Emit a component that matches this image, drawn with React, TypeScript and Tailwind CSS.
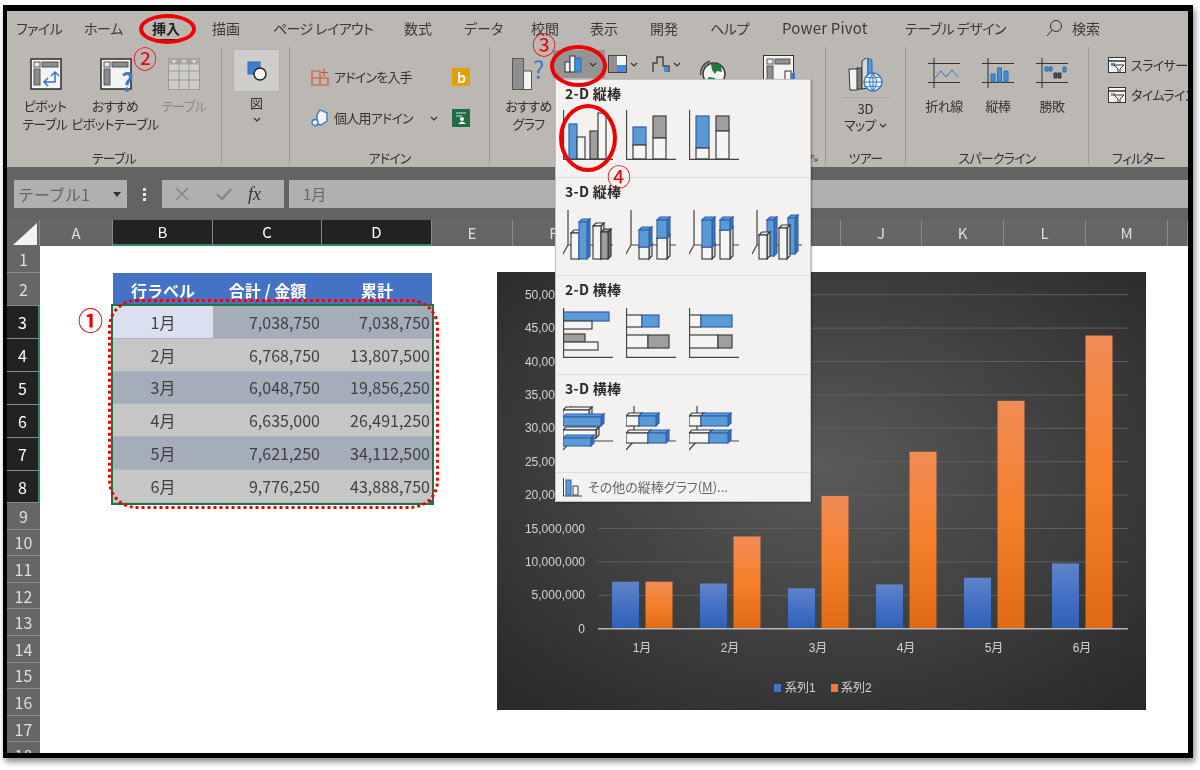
import type { ReactNode } from "react";

const tabs = [
  { label: "ファイル", w: "w-[68px] tracking-[-0.6px]" },
  { label: "ホーム", w: "w-[68px] tracking-[-0.4px]" },
  { label: "挿入", w: "w-[60px] font-bold text-[#222]" },
  { label: "描画", w: "w-[61px]" },
  { label: "ページ レイアウト", w: "w-[131px] tracking-[-0.6px]" },
  { label: "数式", w: "w-[60px]" },
  { label: "データ", w: "w-[67px]" },
  { label: "校閲", w: "w-[59px]" },
  { label: "表示", w: "w-[60px]" },
  { label: "開発", w: "w-[60px]" },
  { label: "ヘルプ", w: "w-[72px] tracking-[-0.4px]" },
  { label: "Power Pivot", w: "w-[123px] text-[15px] tracking-[0.2px]" },
  { label: "テーブル デザイン", w: "w-[140px] tracking-[-0.5px]" },
];

const columns = [
  { label: "A", w: "w-[73px]", on: false },
  { label: "B", w: "w-[100px]", on: true },
  { label: "C", w: "w-[109px]", on: true },
  { label: "D", w: "w-[110px]", on: true },
  { label: "E", w: "w-[81px]", on: false },
  { label: "F", w: "w-[82px]", on: false },
  { label: "G", w: "w-[82px]", on: false },
  { label: "H", w: "w-[82px]", on: false },
  { label: "I", w: "w-[82px]", on: false },
  { label: "J", w: "w-[81px]", on: false },
  { label: "K", w: "w-[82px]", on: false },
  { label: "L", w: "w-[82px]", on: false },
  { label: "M", w: "w-[82px]", on: false },
  { label: "", w: "w-[20px]", on: false },
];

const rowHeads = [
  { n: 1, h: "h-[27px]", on: false },
  { n: 2, h: "h-[33px]", on: false },
  { n: 3, h: "h-[33px]", on: true },
  { n: 4, h: "h-[33px]", on: true },
  { n: 5, h: "h-[33px]", on: true },
  { n: 6, h: "h-[33px]", on: true },
  { n: 7, h: "h-[33px]", on: true },
  { n: 8, h: "h-[32px]", on: true },
  ...[9, 10, 11, 12, 13, 14, 15, 16, 17, 18].map((n) => ({ n, h: "h-[26.6px]", on: false })),
];

const s1 = [7038750, 6768750, 6048750, 6635000, 7621250, 9776250];
const s2 = [7038750, 13807500, 19856250, 26491250, 34112500, 43888750];
const fmt = (v: number) => v.toLocaleString("en-US");

function Chevron({ className = "" }: { className?: string }) {
  return (
    <svg width="8" height="5" viewBox="0 0 8 5" className={className}>
      <path d="M1 1l3 3 3-3" fill="none" stroke="#333" strokeWidth="1.2" />
    </svg>
  );
}

function PivotIcon({ ask }: { ask?: boolean }) {
  return (
    <svg width="36" height="33" viewBox="0 0 36 33" className="overflow-visible">
      <rect x="1" y="1" width="30" height="30" fill="#f4f4f4" stroke="#2b2b2b" strokeWidth="1.5" />
      <rect x="4" y="4" width="6" height="5" fill="#e8e8e8" stroke="#555" />
      <rect x="12" y="4" width="16" height="5" fill="#8c8c8c" stroke="#555" />
      <rect x="4" y="11" width="6" height="16" fill="#8c8c8c" stroke="#555" />
      {ask ? (
        <text x="21" y="34" fontSize="25" fontWeight="700" fill="#3f78c4">?</text>
      ) : (
        <path d="M25 15v9H15M21 18l4-4 4 4M18 20l-4 4 4 4" fill="none" stroke="#2f78c8" strokeWidth="1.5" />
      )}
    </svg>
  );
}

function TableIcon() {
  return (
    <svg width="32" height="32" viewBox="0 0 32 32">
      <rect x="0.5" y="0.5" width="31" height="31" fill="#cfcdca" stroke="#999" />
      <rect x="0.5" y="0.5" width="31" height="6" fill="#aaa" />
      <path d="M11 1v30M21 1v30M1 13h30M1 22h30" stroke="#999" fill="none" />
      <path d="M4 2.5h4l-2 2.5zM14 2.5h4l-2 2.5zM24 2.5h4l-2 2.5z" fill="#eee" />
    </svg>
  );
}

function SparkIcon({ children }: { children: ReactNode }) {
  return (
    <svg width="32" height="30" viewBox="0 0 32 30">
      <path d="M0 5.500h32M0 24.500h32M6 0v30" stroke="#333" fill="none" />
      {children}
    </svg>
  );
}

// small clustered bar chart glyphs in the ribbon
function ColumnGlyph() {
  return (
    <svg width="18" height="18" viewBox="0 0 18 18">
      <rect x="1" y="7" width="5" height="10" fill="#f4f4f4" stroke="#333" />
      <rect x="6" y="1" width="5" height="16" fill="#f4f4f4" stroke="#333" />
      <rect x="11" y="3" width="6" height="14" fill="#3f8fdb" stroke="#2f6fb5" />
    </svg>
  );
}

function Bar3D({ x, y, w, h, fill }: { x: number; y: number; w: number; h: number; fill: string }) {
  const d = 3;
  const side = fill === "#f4f6f5" ? "#d8d8d8" : fill === "#5b9bd5" ? "#3f73b5" : "#6f6f6f";
  const edge = fill === "#5b9bd5" ? "#2f5fb0" : "#333";
  return (
    <g stroke={edge} strokeWidth="1.1">
      <path d={`M${x} ${y}l${d} ${-d}h${w}l${-d} ${d}z`} fill={fill} />
      <path d={`M${x + w} ${y}l${d} ${-d}v${h}l${-d} ${d}z`} fill={side} />
      <rect x={x} y={y} width={w} height={h} fill={fill} />
    </g>
  );
}

const W = "#f4f6f5";
const B = "#5b9bd5";
const G = "#a09f9e";

function Rect({ x, y, w, h, f }: { x: number; y: number; w: number; h: number; f: string }) {
  return <rect x={x} y={y} width={w} height={h} fill={f} stroke={f === B ? "#2f5fb0" : "#404040"} strokeWidth="1.2" />;
}

function Axis2D({ children }: { children: ReactNode }) {
  return (
    <svg width="50" height="50" viewBox="0 0 50 50">
      {children}
      <path d="M0.5 0v49.3H50" fill="none" stroke="#444" strokeWidth="1.3" />
    </svg>
  );
}

function Axis3D({ children, x = 5 }: { children: ReactNode; x?: number }) {
  return (
    <svg width="50" height="52" viewBox="0 0 50 52">
      <path d={`M${x} 0v35H50M${x} 35l-${x} 9`} fill="none" stroke="#444" strokeWidth="1.2" />
      {children}
    </svg>
  );
}

const Vbar = (x: number, w: number, top: number, bottom: number, f: string) => (
  <Bar3D x={x} y={top} w={w} h={bottom - top} fill={f} />
);

function MenuHead({ children }: { children: ReactNode }) {
  return (
    <div className="h-[26px] pl-[9px] text-[14px] leading-[26px] font-bold tracking-[0.3px] text-[#2b2b2b] [font-feature-settings:normal]">
      {children}
    </div>
  );
}

function BigBtn({ icon, lines, w, muted }: { icon: ReactNode; lines: string[]; w: string; muted?: boolean }) {
  return (
    <div className={`flex shrink-0 flex-col items-center ${w}`}>
      <div className="flex h-[32px] items-start justify-center">{icon}</div>
      <div
        className={`mt-[7px] text-center text-[13px] leading-[18px] tracking-[-0.6px] whitespace-nowrap ${
          muted ? "text-[#8b8b8b]" : "text-[#333]"
        }`}
      >
        {lines.map((l) => (
          <div key={l}>{l}</div>
        ))}
      </div>
    </div>
  );
}

function Group({ w, label, children, extra }: { w: string; label: string; children: ReactNode; extra?: ReactNode }) {
  return (
    <div className={`relative mb-[3px] flex shrink-0 flex-col border-r border-[#9c9a97] ${w}`}>
      <div className="flex-1">{children}</div>
      <div className="h-[17px] text-center text-[13px] leading-[22px] tracking-[-0.8px] text-[#333]">{label}</div>
      {extra}
    </div>
  );
}

function Chart() {
  const zero = 356.7;
  const unit = 33.4 / 5000000;
  return (
    <svg
      width="649"
      height="438"
      viewBox="0 0 649 438"
      className="absolute top-[261px] left-[490px] [font-family:'Liberation_Sans','Noto_Sans_CJK_JP',sans-serif]"
    >
      <defs>
        <radialGradient id="bg" cx="50%" cy="45%" r="70%">
          <stop offset="0" stopColor="#5a5a5a" />
          <stop offset="1" stopColor="#2a2a2a" />
        </radialGradient>
        <linearGradient id="blue" x1="0" y1="0" x2="0" y2="1">
          <stop offset="0" stopColor="#6083ca" />
          <stop offset="0.6" stopColor="#3f6dc2" />
          <stop offset="1" stopColor="#2f5fb3" />
        </linearGradient>
        <linearGradient id="orange" x1="0" y1="0" x2="0" y2="1">
          <stop offset="0" stopColor="#f08c55" />
          <stop offset="0.5" stopColor="#f67f2b" />
          <stop offset="1" stopColor="#e06a14" />
        </linearGradient>
      </defs>
      <rect width="649" height="438" fill="url(#bg)" />
      {[1, 2, 3, 4, 5, 6, 7, 8, 9, 10].map((i) => (
        <path key={i} d={`M101 ${zero - i * 33.4}H631`} stroke="#5e5e5e" strokeWidth="1" />
      ))}
      {[0, 1, 2, 3, 4, 5, 6, 7, 8, 9, 10].map((i) => (
        <text key={i} x="88" y={zero - i * 33.4 + 4} textAnchor="end" fontSize="12" fill="#d4d4d4">
          {fmt(i * 5000000)}
        </text>
      ))}
      {s1.map((v, i) => {
        const x = 115 + i * 88;
        return (
          <g key={i}>
            <rect x={x} y={zero - v * unit} width="27" height={v * unit} fill="url(#blue)" />
            <rect x={x + 33.5} y={zero - s2[i] * unit} width="27" height={s2[i] * unit} fill="url(#orange)" />
            <text x={x + 30} y="380" textAnchor="middle" fontSize="12" fill="#d4d4d4">
              {i + 1}月
            </text>
          </g>
        );
      })}
      <path d={`M101 ${zero}H631`} stroke="#b5b5b5" strokeWidth="1.6" />
      <rect x="277" y="412" width="7" height="8" fill="#4472c4" />
      <text x="288" y="420" fontSize="12" fill="#d4d4d4">系列1</text>
      <rect x="334" y="412" width="7" height="8" fill="#ed7d31" />
      <text x="344" y="420" fontSize="12" fill="#d4d4d4">系列2</text>
    </svg>
  );
}

function Menu() {
  return (
    <div className="absolute top-[68px] left-[548px] z-10 flex h-[423px] w-[256px] flex-col border border-[#c4c2c0] bg-[#f3f2f1] shadow-[1px_1px_2px_rgba(0,0,0,0.3)]">
      <div className="h-[98px] border-b border-[#e1dfdd]">
        <MenuHead>2-D 縦棒</MenuHead>
        <div className="flex gap-[13px] pt-[4px] pl-[7px]">
          <Axis2D>
            <Rect x={6} y={14} w={8} h={35} f={B} />
            <Rect x={14} y={27} w={8} h={22} f={W} />
            <Rect x={27} y={21} w={8} h={28} f={G} />
            <Rect x={35} y={3} w={8} h={46} f={W} />
          </Axis2D>
          <Axis2D>
            <Rect x={7} y={17} w={13} h={18} f={B} />
            <Rect x={7} y={35} w={13} h={14} f={W} />
            <Rect x={27} y={6} w={13} h={22} f={G} />
            <Rect x={27} y={28} w={13} h={21} f={W} />
          </Axis2D>
          <Axis2D>
            <Rect x={7} y={6} w={13} h={32} f={B} />
            <Rect x={7} y={38} w={13} h={11} f={W} />
            <Rect x={27} y={6} w={13} h={15} f={G} />
            <Rect x={27} y={21} w={13} h={28} f={W} />
          </Axis2D>
        </div>
      </div>
      <div className="h-[98px] border-b border-[#e1dfdd]">
        <MenuHead>3-D 縦棒</MenuHead>
        <div className="flex gap-[13px] pt-[6px] pl-[7px]">
          <Axis3D>
            {Vbar(8, 8, 23, 49, W)}
            {Vbar(16, 8, 12, 49, B)}
            {Vbar(30, 8, 16, 49, W)}
            {Vbar(38, 7, 22, 49, G)}
          </Axis3D>
          <Axis3D>
            {Vbar(13, 10, 37, 49, W)}
            {Vbar(13, 10, 20, 37, B)}
            {Vbar(31, 10, 28, 49, W)}
            {Vbar(31, 10, 10, 28, B)}
          </Axis3D>
          <Axis3D>
            {Vbar(13, 10, 37, 49, W)}
            {Vbar(13, 10, 10, 37, B)}
            {Vbar(31, 10, 20, 49, W)}
            {Vbar(31, 10, 10, 20, B)}
          </Axis3D>
          <Axis3D>
            {Vbar(15, 7, 10, 46, B)}
            {Vbar(36, 7, 8, 44, B)}
            {Vbar(7, 8, 25, 49, W)}
            {Vbar(27, 8, 18, 49, W)}
          </Axis3D>
        </div>
      </div>
      <div className="h-[99px] border-b border-[#e1dfdd]">
        <MenuHead>2-D 横棒</MenuHead>
        <div className="flex gap-[13px] pt-[6px] pl-[7px]">
          <Axis2D>
            <Rect x={0} y={4} w={46} h={9} f={B} />
            <Rect x={0} y={13} w={29} h={8} f={W} />
            <Rect x={0} y={26} w={22} h={8} f={G} />
            <Rect x={0} y={34} w={35} h={8} f={W} />
          </Axis2D>
          <Axis2D>
            <Rect x={0} y={7} w={16} h={12} f={W} />
            <Rect x={16} y={7} w={17} h={12} f={B} />
            <Rect x={0} y={27} w={22} h={13} f={W} />
            <Rect x={22} y={27} w={21} h={13} f={G} />
          </Axis2D>
          <Axis2D>
            <Rect x={0} y={7} w={12} h={12} f={W} />
            <Rect x={12} y={7} w={31} h={12} f={B} />
            <Rect x={0} y={27} w={29} h={13} f={W} />
            <Rect x={29} y={27} w={14} h={13} f={G} />
          </Axis2D>
        </div>
      </div>
      <div className="h-[98px] border-b border-[#e1dfdd]">
        <MenuHead>3-D 横棒</MenuHead>
        <div className="flex gap-[13px] pt-[5px] pl-[7px]">
          <Axis3D x={8}>
            <Bar3D x={0} y={4} w={26} h={7} fill={W} />
            <Bar3D x={0} y={11} w={38} h={9} fill={B} />
            <Bar3D x={0} y={24} w={33} h={8} fill={W} />
            <Bar3D x={0} y={32} w={28} h={8} fill={B} />
          </Axis3D>
          <Axis3D x={8}>
            <Bar3D x={0} y={10} w={13} h={10} fill={W} />
            <Bar3D x={13} y={10} w={17} h={10} fill={B} />
            <Bar3D x={0} y={27} w={22} h={10} fill={W} />
            <Bar3D x={22} y={27} w={18} h={10} fill={B} />
          </Axis3D>
          <Axis3D x={8}>
            <Bar3D x={0} y={10} w={12} h={10} fill={W} />
            <Bar3D x={12} y={10} w={27} h={10} fill={B} />
            <Bar3D x={0} y={27} w={20} h={10} fill={W} />
            <Bar3D x={20} y={27} w={19} h={10} fill={B} />
          </Axis3D>
        </div>
      </div>
      <div className="flex flex-1 items-center gap-[6px] pl-[7px]">
        <svg width="19" height="19" viewBox="0 0 19 19">
          <rect x="3" y="2" width="5" height="15" fill="#5b9bd5" stroke="#2f5fb0" />
          <rect x="10" y="8" width="5" height="9" fill="#f4f6f5" stroke="#444" />
          <path d="M0.5 0v18H19" fill="none" stroke="#444" />
        </svg>
        <span className="text-[13px] text-[#666]">
          その他の縦棒グラフ(<span className="underline">M</span>)...
        </span>
      </div>
    </div>
  );
}

export default function App() {
  return (
    <div className="h-[770px] w-[1200px] overflow-hidden bg-white pt-[5px] pl-[3px] blur-[0.3px] [font-family:'Noto_Sans_CJK_JP',sans-serif] [font-feature-settings:'palt']">
      <div className="h-[753px] w-[1190px] border-t-[6px] border-r-[5px] border-b-[5px] border-l-[4px] border-black shadow-[2px_4px_6px_rgba(0,0,0,0.45)]">
        <div className="relative h-full w-full overflow-hidden bg-white">
          {/* ribbon */}
          <div className="h-[156px] bg-[#bbb7b3]">
            <div className="flex h-[36px] items-center pb-[2px] pl-[9px] text-[14px] text-[#3a3a3a]">
              {tabs.map((t) => (
                <div key={t.label} className={`shrink-0 whitespace-nowrap ${t.w}`}>
                  {t.label}
                </div>
              ))}
              <svg width="18" height="18" viewBox="0 0 18 18" className="mr-[9px] shrink-0">
                <circle cx="11" cy="7" r="5.5" fill="none" stroke="#333" />
                <path d="M7 11l-5 6" stroke="#333" />
              </svg>
              <span className="shrink-0">検索</span>
            </div>
            <div className="flex h-[120px]">
              <Group w="w-[215px]" label="テーブル">
                <div className="flex pt-[11px] pl-[7px]">
                  <BigBtn w="w-[62px]" icon={<div className="pl-[6px]"><PivotIcon /></div>} lines={["ピボット", "テーブル"]} />
                  <BigBtn w="w-[78px]" icon={<div className="pl-[6px]"><PivotIcon ask /></div>} lines={["おすすめ", "ピボットテーブル"]} />
                  <BigBtn w="w-[60px]" icon={<TableIcon />} lines={["テーブル"]} muted />
                </div>
              </Group>
              <Group w="w-[68px]" label="">
                <div className="flex flex-col pt-[2px] pl-[11px]">
                  <div className="flex h-[43px] w-[47px] items-center justify-center border border-[#b5b3b0] bg-[#cfcdcb]">
                    <svg width="20" height="20" viewBox="0 0 20 20">
                      <rect x="1" y="1" width="12" height="12" fill="#3f7fd0" stroke="#2a66b5" />
                      <circle cx="13" cy="13" r="6" fill="#f4f4f4" stroke="#222" strokeWidth="1.4" />
                    </svg>
                  </div>
                  <div className="mt-[2px] w-[47px] text-center text-[13px] leading-[18px] text-[#333]">図</div>
                  <Chevron className="mx-auto mt-[5px] ml-[20px]" />
                </div>
              </Group>
              <Group w="w-[200px]" label="アドイン">
                <div className="flex w-[180px] flex-col gap-[23px] pt-[21px] pl-[21px] text-[13px] tracking-[-0.8px] text-[#333]">
                  <div className="flex h-[18px] items-center justify-between">
                    <div className="flex items-center gap-[5px]">
                      <svg width="18" height="18" viewBox="0 0 18 18">
                        <path d="M1 3h8v14H1zM1 10h16v7H9M13 1v7M10 4.500h7" fill="none" stroke="#d8552b" strokeWidth="1.2" />
                      </svg>
                      <span>アドインを入手</span>
                    </div>
                    <div className="flex h-[18px] w-[18px] items-center justify-center bg-[#e3a008] text-[14px] leading-none font-bold text-white">b</div>
                  </div>
                  <div className="flex h-[18px] items-center justify-between">
                    <div className="flex items-center gap-[5px]">
                      <svg width="18" height="18" viewBox="0 0 18 18">
                        <path d="M9 1l7 3v8l-6 4-4-1V6z" fill="#f4f4f4" stroke="#2a78c8" strokeWidth="1.3" />
                        <circle cx="4" cy="13.500" r="3" fill="#f4f4f4" stroke="#2a78c8" strokeWidth="1.3" />
                      </svg>
                      <span>個人用アドイン</span>
                      <Chevron className="ml-[12px]" />
                    </div>
                    <svg width="18" height="18" viewBox="0 0 18 18">
                      <rect width="18" height="18" fill="#1f6e43" />
                      <path d="M4 4h10M4 7h6" stroke="#cfe6d8" strokeWidth="1.2" />
                      <circle cx="10" cy="10" r="2" fill="#fff" />
                      <path d="M6 15q4-5 8 0z" fill="#fff" />
                    </svg>
                  </div>
                </div>
              </Group>
              <Group
                w="w-[336px]"
                label="グラフ"
                extra={
                  <svg width="7" height="7" viewBox="0 0 7 7" className="absolute right-[7px] bottom-[2px]">
                    <path d="M0.5 0.500h3M0.500 0.500v3M2 2l4 4M6 3v3H3" fill="none" stroke="#555" />
                  </svg>
                }
              >
                <div className="flex pl-[12px]">
                  <div className="pt-[11px]">
                    <BigBtn
                      w="w-[53px]"
                      icon={
                        <svg width="34" height="32" viewBox="0 0 34 32">
                          <rect x="0.500" y="0.500" width="11" height="31" fill="#8f8f8f" stroke="#555" />
                          <rect x="11.500" y="13" width="8" height="18.500" fill="#f4f4f4" stroke="#555" />
                          <text x="21" y="21" fontSize="24" fill="#3f78c4">?</text>
                        </svg>
                      }
                      lines={["おすすめ", "グラフ"]}
                    />
                  </div>
                  <div className="-ml-[2px] flex pt-[3px]">
                    <div className="flex h-[28px] w-[52px] items-center gap-[7px] bg-[#949494] pl-[11px]">
                      <ColumnGlyph />
                      <Chevron />
                    </div>
                    <div className="ml-[3px] flex h-[28px] w-[44px] items-center gap-[3px]">
                      <svg width="19" height="18" viewBox="0 0 19 18">
                        <rect x="0.500" y="0.500" width="18" height="17" fill="#f4f4f4" stroke="#444" />
                        <rect x="1" y="1" width="8" height="16" fill="#8f8f8f" />
                        <rect x="9" y="10" width="9" height="7" fill="#3f8fdb" />
                      </svg>
                      <Chevron />
                    </div>
                    <div className="flex h-[28px] w-[47px] items-center gap-[3px]">
                      <svg width="18" height="18" viewBox="0 0 18 18">
                        <path d="M1 17V8h4V2h6v9h6v6" fill="none" stroke="#444" strokeWidth="1.4" />
                        <path d="M12 12h4v5h-4z" fill="#3f8fdb" />
                      </svg>
                      <Chevron />
                    </div>
                    <div className="pt-[9px]">
                      <svg width="28" height="28" viewBox="0 0 28 28">
                        <path d="M1.500 16Q1 6 11 2" fill="none" stroke="#444" strokeWidth="1.5" />
                        <circle cx="15" cy="15" r="11" fill="#f4f4f4" stroke="#333" strokeWidth="1.4" />
                        <path d="M12 5q5-2 10 2l1 6-5-1-2 3-3-4zM9 18l7 1v3l-6 0z" fill="#1d7a3a" />
                      </svg>
                    </div>
                    <div className="ml-[36px] pt-[5px]">
                      <svg width="32" height="30" viewBox="0 0 32 30">
                        <rect x="0.500" y="0.500" width="30" height="29" fill="#f4f4f4" stroke="#333" />
                        <rect x="4" y="4" width="6" height="5" fill="#e8e8e8" stroke="#555" />
                        <rect x="12" y="4" width="15" height="5" fill="#8f8f8f" stroke="#555" />
                        <rect x="4" y="11" width="6" height="18" fill="#8f8f8f" stroke="#555" />
                        <rect x="22" y="16" width="6" height="13" fill="#f4f4f4" stroke="#333" />
                        <rect x="28" y="18" width="4" height="11" fill="#3f78c4" />
                      </svg>
                    </div>
                  </div>
                </div>
              </Group>
              <Group w="w-[80px]" label="ツアー">
                <div className="flex flex-col items-center pt-[11px] text-[13px] leading-[16px] text-[#333]">
                  <svg width="36" height="34" viewBox="0 0 36 34">
                    <path d="M1 11h8l2 1v19l-2 1H2z" fill="#f4f4f4" stroke="#333" />
                    <rect x="9" y="10" width="5" height="21" fill="#7d7d7d" stroke="#333" />
                    <path d="M14 3l4-3h2v30l-6 1z" fill="#d9d9d9" stroke="#333" />
                    <path d="M20 0l4 2v20h-4z" fill="#5b9bd5" stroke="#2f6fb5" />
                    <circle cx="25" cy="24" r="9" fill="#f4f4f4" stroke="#2f78c8" strokeWidth="1.4" />
                    <path d="M16 24h18M25 15v18M18 19q7 2 14 0M18 29q7-2 14 0M25 15q-7 9 0 18M25 15q7 9 0 18" fill="none" stroke="#2f78c8" />
                  </svg>
                  <div className="mt-[5px] h-px w-[48px] bg-[#a8a6a3]" />
                  <div className="mt-[3px]">3D</div>
                  <div className="flex items-center gap-[3px] tracking-[-0.6px]">
                    マップ
                    <Chevron />
                  </div>
                </div>
              </Group>
              <Group w="w-[183px]" label="スパークライン">
                <div className="flex pt-[11px] pl-[11px]">
                  <BigBtn
                    w="w-[54px]"
                    icon={
                      <SparkIcon>
                        <path d="M7 20l6-7 5 6 6-7 6 7" fill="none" stroke="#2f78c8" />
                      </SparkIcon>
                    }
                    lines={["折れ線"]}
                  />
                  <BigBtn
                    w="w-[54px]"
                    icon={
                      <SparkIcon>
                        <path d="M9 16h4v8H9zM15.500 10h4v14h-4zM22 13h4v11h-4z" fill="#3f8fdb" stroke="#2f6fb5" />
                      </SparkIcon>
                    }
                    lines={["縦棒"]}
                  />
                  <BigBtn
                    w="w-[54px]"
                    icon={
                      <SparkIcon>
                        <path d="M9 9h3v4H9zM13 9h3v4h-3zM27 9h3v5h-3z" fill="#3f8fdb" stroke="#2f6fb5" />
                        <path d="M18 15h3v5h-3zM22 15h3v5h-3z" fill="#555" stroke="#333" />
                      </SparkIcon>
                    }
                    lines={["勝敗"]}
                  />
                </div>
              </Group>
              <Group w="w-[99px] border-r-0" label="フィルター">
                <div className="flex flex-col gap-[15px] pt-[10px] pl-[19px] text-[13px] tracking-[-0.6px] whitespace-nowrap text-[#333]">
                  {["スライサー", "タイムライン"].map((t, i) => (
                    <div key={t} className="flex h-[15px] items-center gap-[5px]">
                      <svg width="18" height="16" viewBox="0 0 18 16" className="shrink-0">
                        <rect x="0.500" y="0.500" width="17" height="15" fill="#f4f4f4" stroke="#333" />
                        <path d="M1 4h16" stroke="#333" strokeWidth="1.5" />
                        {i === 0 ? <rect x="3" y="6" width="4" height="3" fill="#3f8fdb" /> : <rect x="3" y="6" width="4" height="3" fill="#999" />}
                        <path d="M6 8h10l-4 4v3.500h-2V12z" fill="#f4f4f4" stroke="#333" />
                      </svg>
                      <span>{t}</span>
                    </div>
                  ))}
                </div>
              </Group>
            </div>
          </div>

          {/* formula bar */}
          <div className="flex h-[53px] gap-[5px] bg-[#636363] pt-[13px] pb-[12px] pl-[7px]">
            <div className="flex w-[113px] items-center justify-between bg-[#b0b0b0] pr-[6px] pl-[4px] text-[16px] text-[#666] [font-feature-settings:normal]">
              テーブル1
              <svg width="8" height="5" viewBox="0 0 8 5">
                <path d="M0 0h8l-4 5z" fill="#333" />
              </svg>
            </div>
            <div className="flex w-[25px] flex-col items-center justify-center gap-[2px]">
              <i className="h-[3px] w-[3px] bg-[#e5e5e5]" />
              <i className="h-[3px] w-[3px] bg-[#e5e5e5]" />
              <i className="h-[3px] w-[3px] bg-[#e5e5e5]" />
            </div>
            <div className="flex w-[122px] items-center bg-[#b0b0b0]">
              <svg width="14" height="14" viewBox="0 0 14 14" className="ml-[13px]">
                <path d="M1 1l12 12M13 1L1 13" stroke="#858585" strokeWidth="1.6" />
              </svg>
              <svg width="16" height="14" viewBox="0 0 16 14" className="ml-[27px]">
                <path d="M1 7l5 5 9-10" fill="none" stroke="#858585" strokeWidth="2" />
              </svg>
              <span className="ml-[16px] font-['Liberation_Serif',serif] text-[18px] text-[#333] italic">fx</span>
            </div>
            <div className="flex flex-1 items-center bg-[#b0b0b0] pl-[14px] text-[15px] text-[#666]">1月</div>
          </div>

          {/* column headers */}
          <div className="flex h-[26px] bg-[#666] text-[15px]">
            <div className="flex w-[33px] shrink-0 items-end justify-end border-r border-[#8a8a8a] pr-[2px] pb-[1px]">
              <svg width="24" height="22" viewBox="0 0 24 22">
                <path d="M24 0v22H0z" fill="#f2f2f2" />
              </svg>
            </div>
            {columns.map((c, i) => (
              <div
                key={i}
                className={`flex shrink-0 items-center justify-center border-r border-[#8a8a8a] ${c.w} ${
                  c.on ? "border-b-2 border-b-[#2f8a5a] bg-[#222] text-white" : "text-[#dedede]"
                }`}
              >
                {c.label}
              </div>
            ))}
          </div>

          {/* sheet */}
          <div className="flex">
            <div className="w-[33px] shrink-0">
              {rowHeads.map((r) => (
                <div
                  key={r.n}
                  className={`flex items-center justify-center border-b border-[#8a8a8a] text-[16px] ${r.h} ${
                    r.on ? "border-r-2 border-r-[#2f8a5a] bg-[#222] text-white" : "bg-[#666] text-[#dedede]"
                  }`}
                >
                  {r.n}
                </div>
              ))}
            </div>
            <div className="box-content w-[319px] shrink-0 pt-[27px] pl-[73px]">
              <div className="flex h-[33px] w-[319px] items-center bg-[#4472c4] text-[16px] font-bold text-white [font-feature-settings:normal]">
                <div className="w-[100px] text-center">行ラベル</div>
                <div className="w-[109px] text-center">合計 / 金額</div>
                <div className="w-[110px] text-center">累計</div>
              </div>
              <div className="relative w-[319px] text-[16px] text-[#404040] outline-2 outline-[#217346]">
                {s1.map((v, i) => (
                  <div
                    key={i}
                    className={`flex h-[32.8px] items-center border-b border-[#b0b5c2] ${
                      i % 2 === 0 ? "bg-[#a6adba]" : "bg-[#c6c6c6]"
                    }`}
                  >
                    <div className={`flex h-full w-[100px] items-center justify-center ${i === 0 ? "bg-[#dae0f0]" : ""}`}>{i + 1}月</div>
                    <div className="w-[109px] pr-[2px] text-right">{fmt(v)}</div>
                    <div className="w-[110px] pr-[2px] text-right">{fmt(s2[i])}</div>
                  </div>
                ))}
                <i className="absolute -right-[2px] -bottom-[2px] h-[5px] w-[5px] bg-[#217346]" />
              </div>
            </div>
          </div>

          <Chart />
          <Menu />

          {/* callouts */}
          <div className="absolute top-[3px] left-[132px] z-20 h-[30px] w-[57px] rounded-[50%] border-4 border-[#f00000]" />
          <div className="absolute top-[28px] left-[145px] z-10 h-[2px] w-[29px] bg-[#333]" />
          <div className="absolute top-[34px] left-[543px] z-20 h-[42px] w-[57px] rounded-[50%] border-4 border-[#f00000]" />
          <div className="absolute top-[93px] left-[552px] z-20 h-[68px] w-[58px] rounded-[50%] border-4 border-[#f00000]" />
          <div className="absolute top-[288px] left-[101px] z-20 h-[210px] w-[331px] rounded-[28px] border-[3px] border-dotted border-[#f00000]" />
          <span className="absolute top-[296px] left-[71px] z-20 text-[25px] leading-none font-bold text-[#f00000]">①</span>
          <span className="absolute top-[35px] left-[126px] z-20 text-[24px] leading-none text-[#f00000]">②</span>
          <span className="absolute top-[21px] left-[525px] z-20 text-[24px] leading-none text-[#f00000]">③</span>
          <span className="absolute top-[153px] left-[600px] z-20 text-[24px] leading-none text-[#f00000]">④</span>
        </div>
      </div>
    </div>
  );
}
